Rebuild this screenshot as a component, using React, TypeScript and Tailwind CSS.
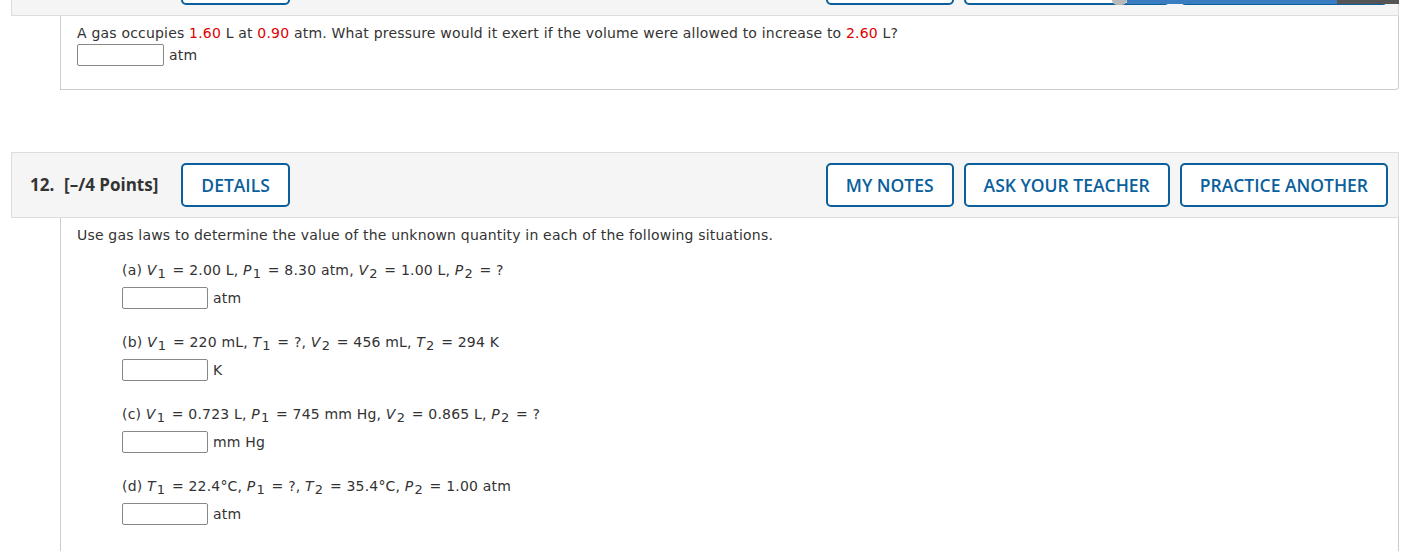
import React from 'react';

const body = {fontFamily: '"DejaVu Sans", Verdana, sans-serif'};

function Btn({label}: {label: string}) {
  return (
    <button className="h-[44px] rounded-[5px] border-2 border-[#0a5f9c] bg-white px-[18px] text-[17.5px] font-semibold text-[#0a5f9c]">
      {label}
    </button>
  );
}

function Header({num}: {num: string}) {
  return (
    <div
      className="flex h-[66px] items-center border border-[#dddddd] bg-[#f5f5f5] pl-[18px] pr-[10px]"
      style={{fontFamily: '"Open Sans", sans-serif'}}
    >
      <span className="w-[34px] text-[17px] font-bold text-[#333]">{num}</span>
      <span className="text-[17px] font-bold text-[#333]">[–/4 Points]</span>
      <div className="ml-[23px]">
        <Btn label="DETAILS" />
      </div>
      <div className="ml-auto flex gap-[10px]">
        <Btn label="MY NOTES" />
        <Btn label="ASK YOUR TEACHER" />
        <Btn label="PRACTICE ANOTHER" />
      </div>
    </div>
  );
}

function Answer({unit, w = 'w-[86px]'}: {unit: string; w?: string}) {
  return (
    <div className="flex items-center gap-[5px]">
      <input className={`h-[22px] ${w} rounded-[2px] border border-[#888] bg-white`} />
      <span>{unit}</span>
    </div>
  );
}

const V = ({s}: {s: string}) => (
  <>
    <i>{s[0]}</i>
    <sub className="pl-[1px] pr-[2px] text-[13px]">{s[1]}</sub>
  </>
);

function Part({children, unit}: {children: React.ReactNode; unit: string}) {
  return (
    <div className="mb-[23px]">
      <div className="h-[20px] leading-[20px]">{children}</div>
      <div className="mt-[7px]">
        <Answer unit={unit} />
      </div>
    </div>
  );
}

export default function App() {
  return (
    <div className="relative min-h-[551px] overflow-hidden bg-white text-[14px] text-[#333]">
      {/* overlay strip at top */}
      <div className="absolute left-[1112px] top-0 z-10 flex h-[4px]">
        <div className="h-[5px] w-[15px] rounded-b-full bg-[#b9b9b9]" />
        <div className="w-[210px] bg-[#3a7cc2]" />
        <div className="w-[62px] bg-[#555]" />
      </div>

      <div className="-mt-[50px] ml-[11px] w-[1388px]">
        <Header num="11." />
        <div
          className="ml-[49px] rounded-br-[4px] border-x border-b border-[#cccccc] px-[16px] pb-[23px] pt-[7px] tracking-[0.19px]"
          style={body}
        >
          <div className="h-[20px] leading-[20px]">
            A gas occupies <span className="text-[#e00000]">1.60</span> L at{' '}
            <span className="text-[#e00000]">0.90</span> atm. What pressure would it exert if the volume were allowed to
            increase to <span className="text-[#e00000]">2.60</span> L?
          </div>
          <div className="mt-[1px]">
            <Answer unit="atm" w="w-[87px]" />
          </div>
        </div>
      </div>

      <div className="ml-[11px] mt-[62px] w-[1388px]">
        <Header num="12." />
        <div
          className="ml-[49px] min-h-[400px] border-x border-[#cccccc] px-[16px] pt-[7px] tracking-[0.19px]"
          style={body}
        >
          <div className="h-[20px] leading-[20px]">
            Use gas laws to determine the value of the unknown quantity in each of the following situations.
          </div>
          <div className="ml-[45px] mt-[15px]">
            <Part unit="atm">
              (a) <V s="V1" /> = 2.00 L, <V s="P1" /> = 8.30 atm, <V s="V2" /> = 1.00 L, <V s="P2" /> = ?
            </Part>
            <Part unit="K">
              (b) <V s="V1" /> = 220 mL, <V s="T1" /> = ?, <V s="V2" /> = 456 mL, <V s="T2" /> = 294 K
            </Part>
            <Part unit="mm Hg">
              (c) <V s="V1" /> = 0.723 L, <V s="P1" /> = 745 mm Hg, <V s="V2" /> = 0.865 L, <V s="P2" /> = ?
            </Part>
            <Part unit="atm">
              (d) <V s="T1" /> = 22.4°C, <V s="P1" /> = ?, <V s="T2" /> = 35.4°C, <V s="P2" /> = 1.00 atm
            </Part>
          </div>
        </div>
      </div>
    </div>
  );
}
